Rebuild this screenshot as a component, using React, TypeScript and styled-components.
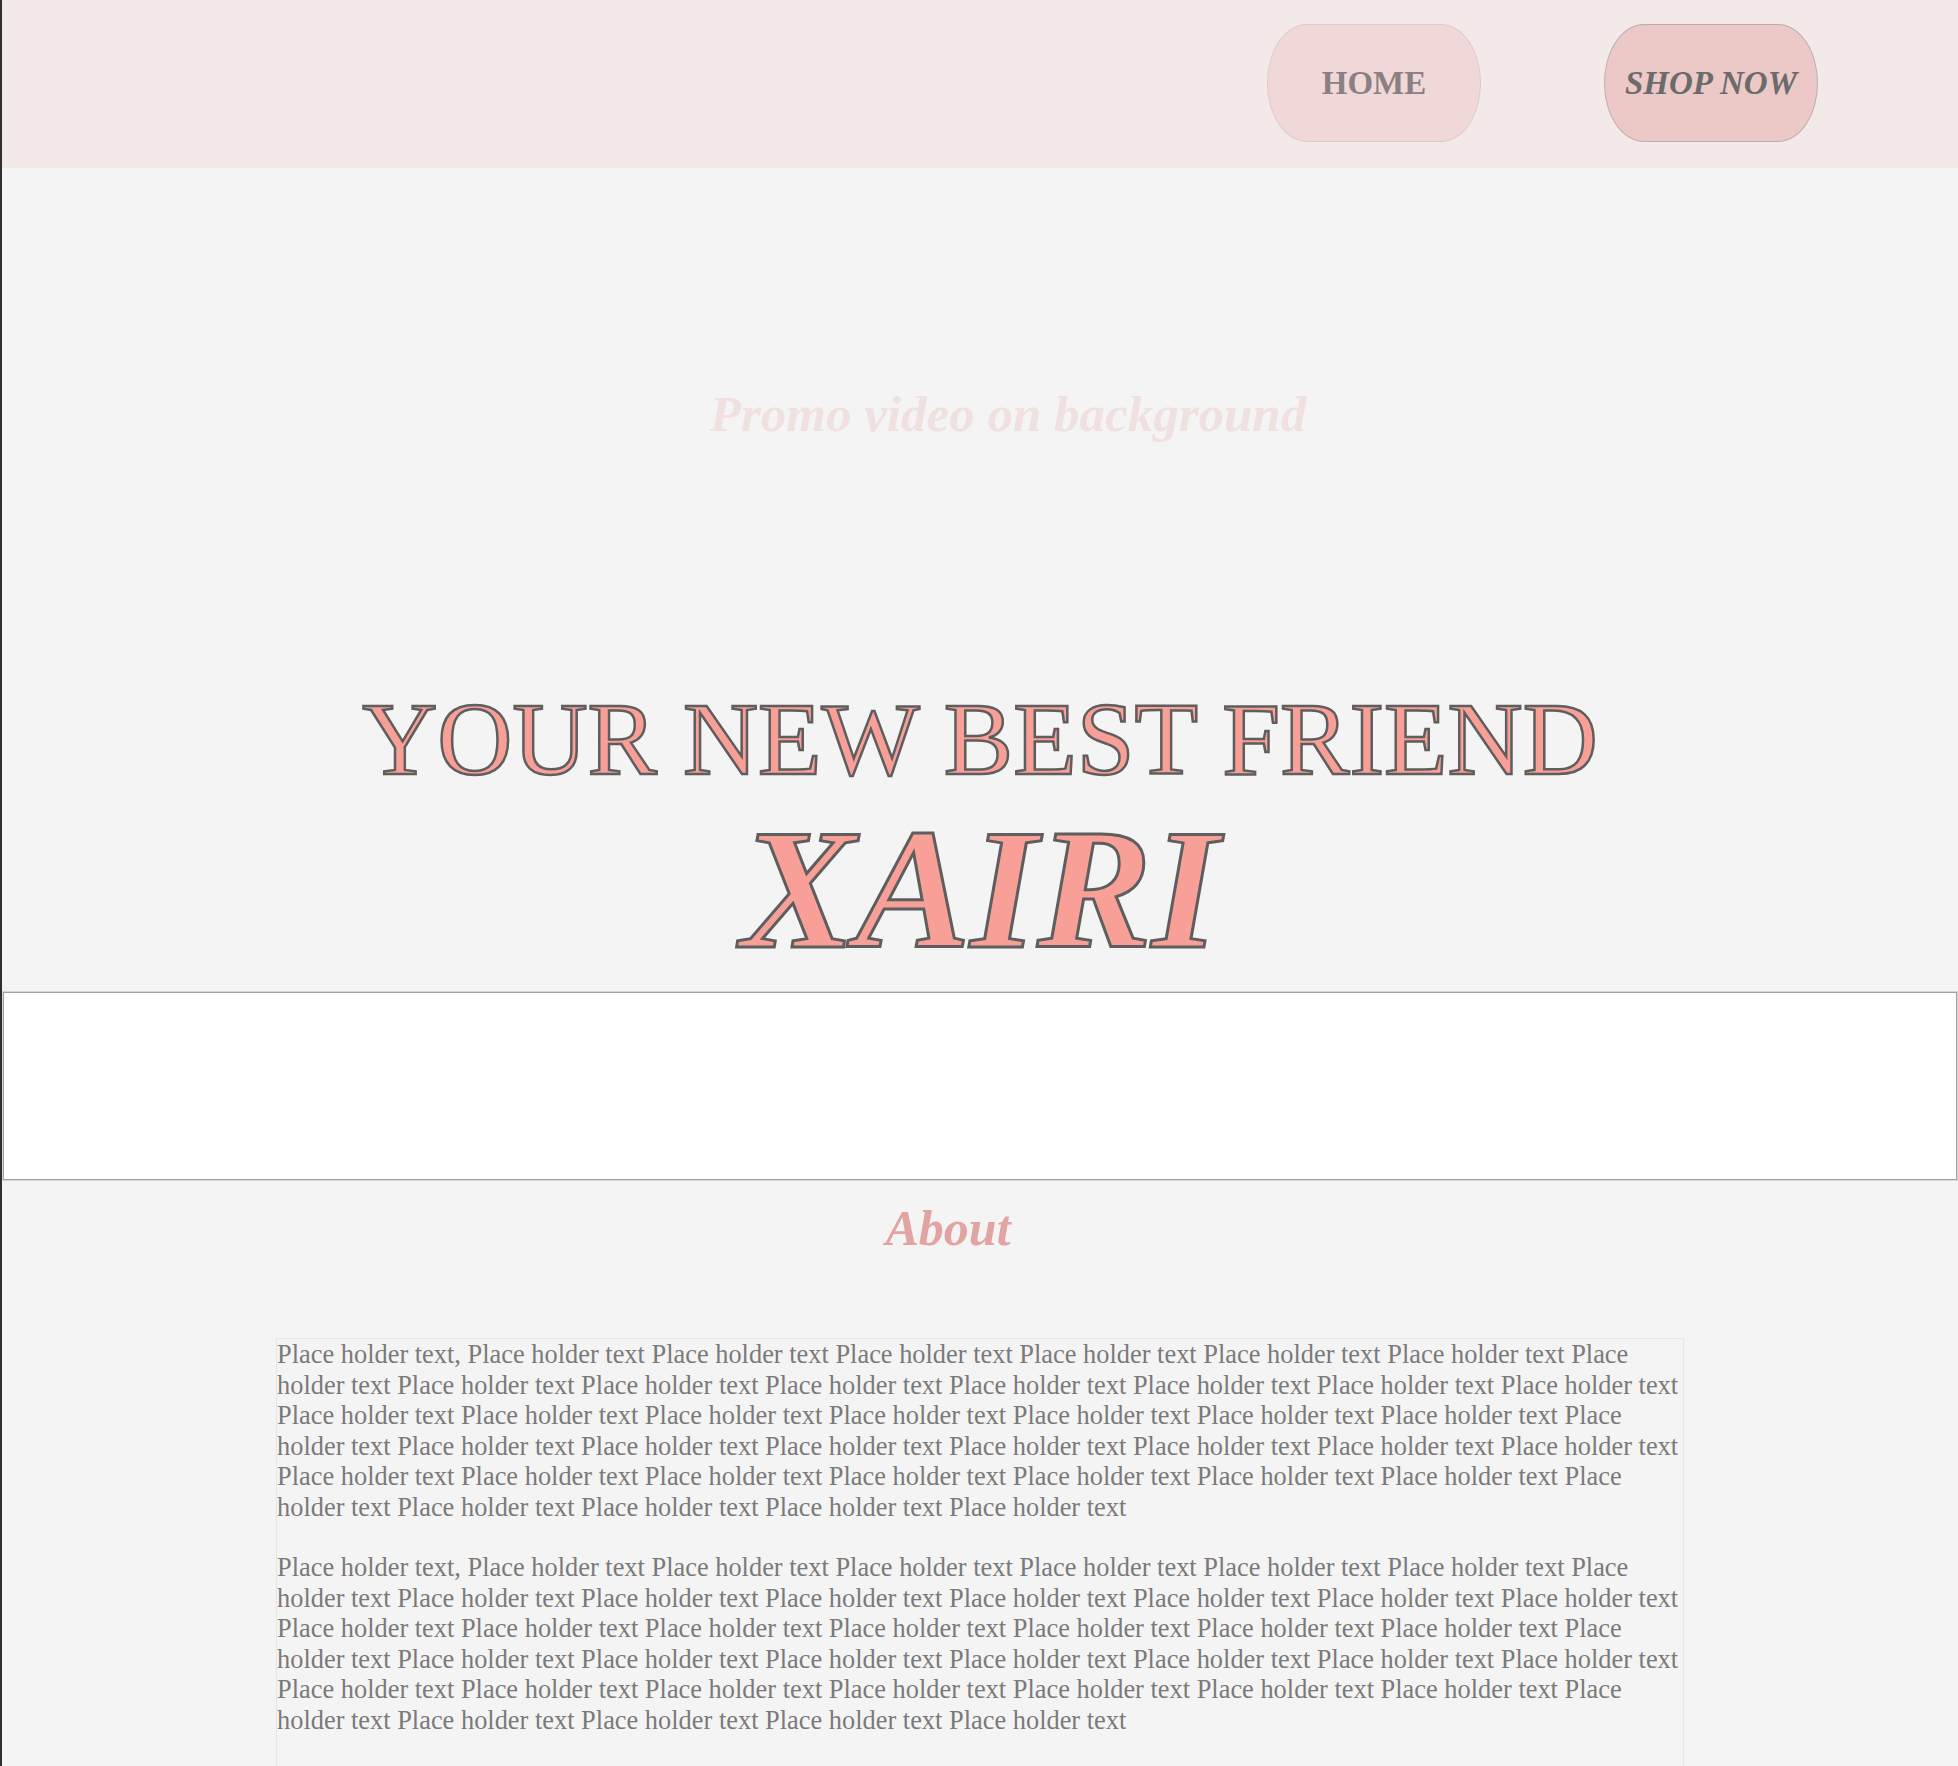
import React from "react";
import styled, { createGlobalStyle } from "styled-components";

const GlobalStyle = createGlobalStyle`
  html, body {
    margin: 0;
    padding: 0;
    background: #f4f4f4;
    overflow-x: hidden;
  }
  body {
    font-family: "Liberation Serif", "Times New Roman", serif;
  }
`;

const Page = styled.div`
  min-height: 100vh;
  border-left: 2px solid #2f2f2f;
  background: #f4f4f4;
  display: flex;
  flex-direction: column;
`;

const Header = styled.header`
  height: 168px;
  box-sizing: border-box;
  background: #f3e9e9;
  display: flex;
  justify-content: flex-end;
  align-items: flex-start;
  padding: 24px 140px 0 0;
  gap: 123px;
`;

const NavButton = styled.button<{ $primary?: boolean }>`
  width: 214px;
  height: 118px;
  box-sizing: border-box;
  border-radius: 40px / 59px;
  border: 1px solid ${(p) => (p.$primary ? "#bdaeae" : "#ddcbcb")};
  background: ${(p) => (p.$primary ? "#ecc8c7" : "#f0d8d9")};
  color: ${(p) => (p.$primary ? "#6b6b6b" : "#8b8081")};
  font-family: "Liberation Serif", "Times New Roman", serif;
  font-size: 33px;
  font-weight: 700;
  font-style: ${(p) => (p.$primary ? "italic" : "normal")};
  line-height: 1;
  padding: 0;
  display: flex;
  align-items: center;
  justify-content: center;
  cursor: pointer;
`;

const Hero = styled.section`
  display: flex;
  flex-direction: column;
  align-items: center;
  padding-top: 216px;
`;

const Promo = styled.p`
  margin: 0;
  padding-left: 56px;
  font-size: 51px;
  line-height: 60px;
  font-weight: 700;
  font-style: italic;
  color: #f0e0e0;
`;

const Tagline = styled.h2`
  margin: 235px 0 0;
  font-size: 104px;
  line-height: 120px;
  font-weight: 400;
  color: #f8a097;
  -webkit-text-stroke: 2.5px #5e5e5e;
  letter-spacing: 0;
`;

const Brand = styled.h1`
  margin: 0;
  font-size: 172px;
  line-height: 180px;
  font-weight: 700;
  font-style: italic;
  color: #f8a097;
  -webkit-text-stroke: 3px #5e5e5e;
`;

const VideoFrame = styled.div`
  margin-top: 12px;
  height: 190px;
  box-sizing: border-box;
  background: #ffffff;
  border: 1px solid #d6d6d6;
  box-shadow: inset 0 0 0 1px #a2a2a2;
`;

const AboutTitle = styled.h3`
  margin: 17px 0 0;
  padding-right: 64px;
  text-align: center;
  font-size: 50px;
  line-height: 60px;
  font-weight: 700;
  font-style: italic;
  color: #e2a4a2;
`;

const TextBox = styled.div`
  width: 1408px;
  box-sizing: border-box;
  margin: 80px auto 0;
  border: 1px solid #e6e6e6;
  border-bottom: none;
  padding-bottom: 80px;
`;

const Paragraph = styled.p`
  margin: 0 0 30px;
  font-size: 26.4px;
  line-height: 30.5px;
  color: #7a7a7a;
`;

const paragraphText =
  "Place holder text, " + Array.from({ length: 41 }, () => "Place holder text").join(" ");

export default function App() {
  return (
    <>
      <GlobalStyle />
      <Page>
        <Header>
          <NavButton>HOME</NavButton>
          <NavButton $primary>SHOP NOW</NavButton>
        </Header>
        <Hero>
          <Promo>Promo video on background</Promo>
          <Tagline>YOUR NEW BEST FRIEND</Tagline>
          <Brand>XAIRI</Brand>
        </Hero>
        <VideoFrame />
        <AboutTitle>About</AboutTitle>
        <TextBox>
          <Paragraph>{paragraphText}</Paragraph>
          <Paragraph>{paragraphText}</Paragraph>
        </TextBox>
      </Page>
    </>
  );
}
